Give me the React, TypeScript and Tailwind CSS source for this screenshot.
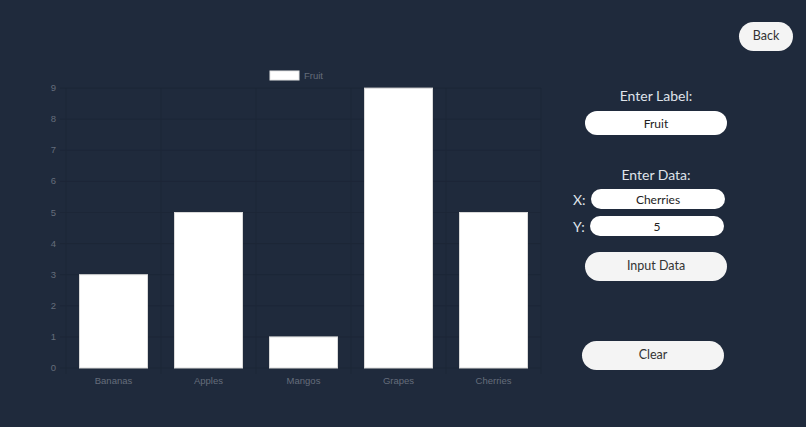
import React from "react"

const data = [
  { label: "Bananas", value: 3 },
  { label: "Apples", value: 5 },
  { label: "Mangos", value: 1 },
  { label: "Grapes", value: 9 },
  { label: "Cherries", value: 5 },
]

const X0 = 66
const STEP = 95
const Y0 = 368
const UNIT = 31.1

function BarChart() {
  const ticks = [0, 1, 2, 3, 4, 5, 6, 7, 8, 9]
  return (
    <svg width="560" height="340" viewBox="0 60 560 340" className="shrink-0">
      {/* legend */}
      <rect x="270" y="71" width="29" height="9" fill="#ffffff" stroke="#e5e5e5" strokeWidth="1" />
      <text x="304" y="79" fontSize="9.5" fill="#656d7b" fontFamily="Liberation Sans, Arial, sans-serif">
        Fruit
      </text>
      {/* horizontal grid */}
      {ticks.map((t) => {
        const y = Y0 - t * UNIT
        return (
          <g key={t}>
            <line x1={X0 - 6} x2={X0 + STEP * 5} y1={y} y2={y} stroke="#1c2637" strokeWidth="1" />
            <text
              x="56"
              y={y + 3}
              fontSize="9.5"
              textAnchor="end"
              fill="#656d7b"
              fontFamily="Liberation Sans, Arial, sans-serif"
            >
              {t}
            </text>
          </g>
        )
      })}
      {/* vertical grid */}
      {[0, 1, 2, 3, 4, 5].map((i) => (
        <line key={i} x1={X0 + i * STEP} x2={X0 + i * STEP} y1={Y0 - 9 * UNIT} y2={Y0 + 6} stroke="#1c2637" strokeWidth="1" />
      ))}
      {/* bars */}
      {data.map((d, i) => {
        const cx = X0 + STEP * i + STEP / 2
        const h = d.value * UNIT
        return (
          <g key={d.label}>
            <rect x={cx - 34} y={Y0 - h} width="68" height={h} fill="#ffffff" stroke="#d9d9d9" strokeWidth="1" />
            <text
              x={cx}
              y="384"
              fontSize="9.5"
              textAnchor="middle"
              fill="#656d7b"
              fontFamily="Liberation Sans, Arial, sans-serif"
            >
              {d.label}
            </text>
          </g>
        )
      })}
    </svg>
  )
}

export default function App() {
  return (
    <div className="h-[427px] w-full overflow-hidden bg-[#1f2a3c] font-['Lato',sans-serif]">
      {/* Top bar */}
      <div className="flex h-[60px] justify-end pr-[13px] pt-[22px]">
        <button className="h-[29px] w-[54px] rounded-full bg-[#f4f4f4] text-[12.5px] text-[#333]">Back</button>
      </div>

      <div className="flex">
        <BarChart />

        {/* Form panel */}
        <div className="ml-[10px] flex w-[172px] flex-col">
          <div className="mt-[26px] text-center text-[14px] leading-[20px] text-[#dfe3ea]">Enter Label:</div>
          <input
            readOnly
            value="Fruit"
            className="ml-[15px] mt-[5px] h-[24px] w-[142px] rounded-full bg-white text-center text-[12px] text-[#222] outline-none"
          />

          <div className="mt-[30px] text-center text-[14px] leading-[20px] text-[#dfe3ea]">Enter Data:</div>
          <div className="mt-[4px] flex h-[20px] items-center">
            <span className="ml-[3px] w-[18px] text-[14px] text-[#dfe3ea]">X:</span>
            <input
              readOnly
              value="Cherries"
              className="h-[20px] w-[134px] rounded-full bg-white text-center text-[12px] text-[#222] outline-none"
            />
          </div>
          <div className="mt-[7px] flex h-[20px] items-center">
            <span className="ml-[3px] w-[17px] text-[14px] text-[#dfe3ea]">Y:</span>
            <input
              readOnly
              value="5"
              className="h-[20px] w-[134px] rounded-full bg-white text-center text-[12px] text-[#222] outline-none"
            />
          </div>
          <button className="ml-[15px] mt-[16px] h-[29px] w-[142px] rounded-full bg-[#f4f4f4] text-[12.5px] text-[#333]">
            Input Data
          </button>
          <button className="ml-[12px] mt-[60px] h-[29px] w-[142px] rounded-full bg-[#f4f4f4] text-[12.5px] text-[#333]">
            Clear
          </button>
        </div>
      </div>
    </div>
  )
}
